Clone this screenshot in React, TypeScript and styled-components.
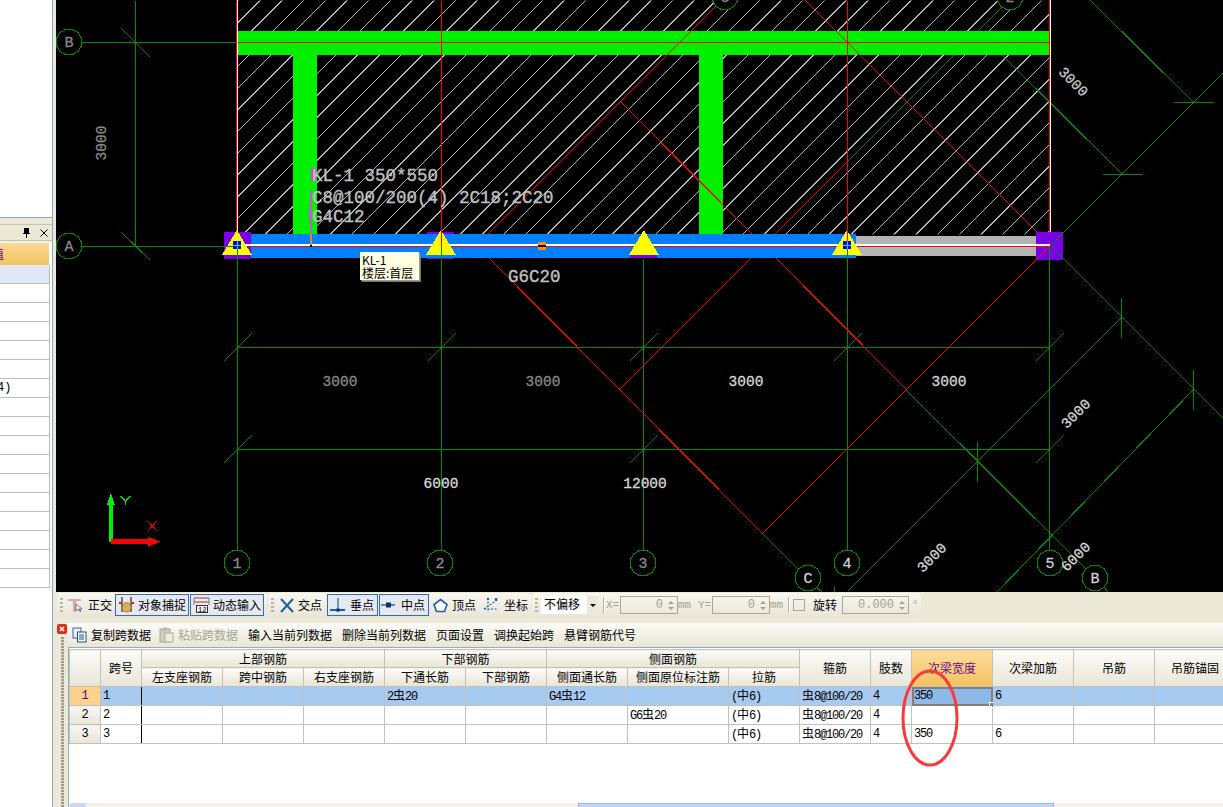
import React from "react";
import styled, { createGlobalStyle } from "styled-components";

const Global = createGlobalStyle`
  html, body { margin: 0; padding: 0; background: #ece9d8; overflow: hidden; }
  #root { width: 1223px; height: 807px; }
`;

const cjk = `"Noto Sans CJK SC", "Liberation Sans", sans-serif`;
const mono = `"Liberation Mono", "Noto Sans CJK SC", monospace`;

const Root = styled.div`
  width: 1223px; height: 807px; display: flex; overflow: hidden; background: #ece9d8;
  font: 12px/14px ${cjk}; color: #000;
`;

/* ---------- left dock ---------- */
const Side = styled.aside`
  width: 52px; flex: none; display: flex; flex-direction: column; background: #ece9d8; overflow: hidden;
`;
const TopPane = styled.div`
  height: 217px; background: #fff; border-bottom: 1px solid #8aa8c0; flex: none;
`;
const DockTitle = styled.div`
  height: 15px; margin-top: 6px; flex: none; display: flex; align-items: center; justify-content: flex-end;
  gap: 9px; padding-right: 4px; background: #ece9d8; border-top: 1px solid #c8c5b4; border-bottom: 1px solid #c8c5b4;
`;
const PropPane = styled.div`
  flex: 1; background: #fff; margin-top: 1px; padding-top: 1px;
`;
const PropHead = styled.div`
  width: 49px; height: 22px; overflow: hidden; background: linear-gradient(#fbd892, #f3c263);
  color: #5a0a80; line-height: 22px; text-indent: -8px;
`;
const PropRow = styled.div<{ $first?: boolean }>`
  width: 49px; height: 18px; border-bottom: 1px solid #bcbcbc; border-right: 1px solid #bcbcbc;
  background: ${(p) => (p.$first ? "#dfe8f4" : "#fff")};
  font: 12px/18px ${mono}; overflow: hidden; text-indent: -3px;
`;

/* ---------- main column ---------- */
const Main = styled.main`
  flex: 1; min-width: 0; display: flex; flex-direction: column; border-left: 1px solid #8aa8c0;
`;
const CanvasWrap = styled.div`
  position: relative; height: 592px; margin-left: 3px; background: #000; flex: none; overflow: hidden;
  svg { display: block; }
`;
const Tip = styled.div`
  position: absolute; left: 304px; top: 252px; width: 57px; height: 27px; padding: 1px 0 0 2px;
  background: #ffffe1; box-shadow: 1px 1px 0 #999, 2px 2px 0 #777; font: 12px/13px ${cjk}; color: #000; white-space: nowrap;
`;
const Bottom = styled.section`
  flex: 1; display: flex; flex-direction: column; background: #ece9d8; min-height: 0; position: relative;
`;
const ToolRow = styled.div`
  display: flex; gap: 1px; height: 24px; margin-top: 1px; padding-left: 4px; flex: none;
`;
const Group = styled.div<{ $w: number }>`
  width: ${(p) => p.$w}px; height: 24px; display: flex; align-items: center; flex: none; border-radius: 4px;
  padding-left: 3px; box-sizing: border-box;
  background: linear-gradient(#f8f7f0, #e9e6d7);
`;
const Grip = styled.i`
  width: 3px; height: 15px; margin-right: 3px; flex: none;
  background: repeating-linear-gradient(#b9b6a6 0 2px, transparent 2px 4px);
`;
const Item = styled.div<{ $w: number; $pad: number; $gap: number; $on?: boolean; $ml?: number }>`
  width: ${(p) => p.$w}px; height: 22px; box-sizing: border-box; display: flex; align-items: center; flex: none;
  gap: ${(p) => p.$gap}px; padding-left: ${(p) => p.$pad}px; margin-left: ${(p) => p.$ml ?? 0}px; white-space: nowrap;
  border: 1px solid ${(p) => (p.$on ? "#316ac5" : "transparent")};
  background: ${(p) => (p.$on ? "#e6e9f0" : "transparent")};
  svg { flex: none; }
`;
const Combo = styled.div`
  width: 58px; height: 18px; display: flex; margin-right: 4px; background: #fff; flex: none; padding-left: 3px; box-sizing: border-box;
  line-height: 16px;
`;
const ComboArrow = styled.span`
  width: 12px; margin-left: auto; background: #ece9d8; display: flex; align-items: center; justify-content: center;
  &::before { content: ""; border: 3px solid transparent; border-top: 3px solid #000; margin-top: 3px; }
`;
const Sep = styled.i<{ $ml?: number; $mr?: number }>`
  width: 1px; height: 16px; background: #b5b2a2; box-shadow: 1px 0 0 #fff; flex: none;
  margin: 0 ${(p) => p.$mr ?? 2}px 0 ${(p) => p.$ml ?? 0}px;
`;
const Muted = styled.span<{ $w: number; $ml?: number }>`
  width: ${(p) => p.$w}px; margin-left: ${(p) => p.$ml ?? 0}px; flex: none; color: #a5a293; font: 11px/14px ${mono}; white-space: nowrap;
`;
const Spin = styled.div<{ $w: number; $ml?: number }>`
  width: ${(p) => p.$w}px; height: 18px; margin-left: ${(p) => p.$ml ?? 0}px; box-sizing: border-box; flex: none;
  border: 1px solid #aca899; display: flex; align-items: center; justify-content: flex-end;
  color: #a5a293; font: 12px/16px ${mono}; gap: 5px; padding-right: 3px;
`;
const SpinBtns = styled.span`
  display: flex; flex-direction: column; gap: 3px;
  &::before { content: ""; border: 3px solid transparent; border-top: 0; border-bottom: 3px solid #a5a293; }
  &::after { content: ""; border: 3px solid transparent; border-bottom: 0; border-top: 3px solid #a5a293; }
`;
const Check = styled.i`
  width: 10px; height: 10px; border: 1px solid #aca899; margin-left: 3px; flex: none;
`;
const Label = styled.span<{ $ml?: number }>`
  margin-left: ${(p) => p.$ml ?? 0}px; flex: none;
`;

const Lower = styled.div`
  flex: 1; display: flex; margin-top: 6px; min-height: 0;
`;
const Gutter = styled.div`
  width: 15px; flex: none; padding: 1px 0 0 4px; box-sizing: border-box; display: flex; flex-direction: column; gap: 3px;
`;
const Dotted = styled.i`
  width: 3px; margin-left: 4px; flex: 1;
  background: repeating-linear-gradient(#9c9a8c 0 2px, #e2dfcf 2px 3px);
`;
const Content = styled.div`
  flex: 1; min-width: 0; display: flex; flex-direction: column;
`;
const Bar = styled.div`
  height: 25px; flex: none; display: flex; align-items: center; padding-left: 4px; white-space: nowrap;
  background: linear-gradient(#fcfbf6, #e9e6d8); border-bottom: 1px solid #94aec0; box-sizing: border-box;
`;
const BarBtn = styled.span<{ $off?: boolean; $ml?: number; $gap?: number }>`
  display: flex; align-items: center; gap: ${(p) => p.$gap ?? 0}px; margin-left: ${(p) => p.$ml ?? 0}px;
  color: ${(p) => (p.$off ? "#a8a598" : "#000")};
`;
const GridBox = styled.div`
  flex: 1; min-height: 0; background: #fff; border-left: 1px solid #94aec0; padding-top: 1px; overflow: hidden; position: relative;
`;
const Table = styled.table`
  table-layout: fixed; width: 1166px; border-collapse: collapse; font: 12px/14px ${cjk};
`;
const Th = styled.th<{ $sel?: boolean; $h: number }>`
  height: ${(p) => p.$h}px; padding: 0; font-weight: 400; text-align: center; box-sizing: border-box; white-space: nowrap;
  border: 1px solid #c4c2b6; color: ${(p) => (p.$sel ? "#6a0a8a" : "#000")};
  background: ${(p) => (p.$sel ? "linear-gradient(#fcdc9c, #f3c160)" : "linear-gradient(#fcfbf7, #e8e5d7)")};
`;
const RowHead = styled.td<{ $sel?: boolean }>`
  height: 19px; padding: 0; text-align: center; box-sizing: border-box; border: 1px solid #c0c0c0;
  font: 12px/14px ${mono};
  color: ${(p) => (p.$sel ? "#4a0a80" : "#000")};
  background: ${(p) => (p.$sel ? "#ffd18c" : "linear-gradient(#f8f7f1, #e8e5d8)")};
`;
const Td = styled.td<{ $sel?: boolean; $frozen?: boolean; $active?: boolean }>`
  height: 19px; padding: 0 0 0 2px; box-sizing: border-box; overflow: hidden; white-space: nowrap; position: relative;
  border: 1px solid #c0c0c0; border-right: 1px solid ${(p) => (p.$frozen ? "#000" : "#c0c0c0")};
  font: 12px/14px ${mono}; letter-spacing: -1.2px;
  background: ${(p) => (p.$active ? "#8db8e8" : p.$sel ? "#a6caf0" : "#fff")};
  ${(p) => p.$active && "outline: 2px solid #808080; outline-offset: -2px; overflow: visible;"}
`;
const Handle = styled.i`
  position: absolute; right: -3px; bottom: -3px; width: 4px; height: 4px; background: #808080; border: 1px solid #fff;
`;
const Rebar = styled.span`
  font: 12px/14px ${cjk}; letter-spacing: 0;
`;
const Ring = styled.svg`
  position: absolute; left: 831px; top: 20px; pointer-events: none;
`;
const Scroll = styled.div`
  position: absolute; left: 0; right: 0; bottom: 0; height: 4px; display: flex; background: #f4f2e8;
`;
const ScrollBtn = styled.i`
  width: 16px; flex: none; background: #c7d6f5; margin-left: 1px; border-radius: 2px 2px 0 0;
`;
const ScrollThumb = styled.i`
  width: 476px; margin-left: 492px; flex: none; background: #c3d4fa; border: 1px solid #9db4e4; border-bottom: 0; box-sizing: border-box;
`;

/* ---------- icons ---------- */
const Ortho = () => (
  <svg width="16" height="16" viewBox="0 0 16 16"><path d="M1 2h13v2H9v11H6V4H1z" fill="#d9a8a8" /><path d="M9 7v7l2-2 2 3 1-1-2-2h3z" fill="#fff" stroke="#556" strokeWidth=".8" /></svg>
);
const Snap = () => (
  <svg width="17" height="18" viewBox="0 0 17 18"><path d="M4 1v15M13 1v15" stroke="#7a3a2a" strokeWidth="1.5" /><path d="M1 7h2M14 7h2" stroke="#c02020" strokeWidth="2" /><path d="M5 9c1-3 5-3 7-1 2 3 1 7-2 8-3 0-6-1-6-4z" fill="#d8b050" stroke="#8a7030" strokeWidth=".7" /></svg>
);
const Dyn = () => (
  <svg width="17" height="17" viewBox="0 0 17 17"><path d="M1 1h15M1 5h15" stroke="#b03030" strokeWidth="1.2" /><path d="M1 1v7M16 1v7" stroke="#777" /><rect x="3.5" y="8.5" width="11" height="7" fill="#f4f4f4" stroke="#333" /><text x="5" y="14.5" fontSize="7" fontFamily="Liberation Mono">12</text></svg>
);
const Cross = () => (
  <svg width="14" height="15" viewBox="0 0 14 15"><path d="M1 1l12 13M13 1L1 14" stroke="#1c5cb0" strokeWidth="2" /></svg>
);
const Perp = () => (
  <svg width="15" height="16" viewBox="0 0 15 16"><path d="M8 1v14" stroke="#1c5cb0" strokeWidth="1.2" /><path d="M0 13h15" stroke="#1c5cb0" strokeWidth="2" /><rect x="6.5" y="11.5" width="3" height="3" fill="#12306a" /></svg>
);
const Mid = () => (
  <svg width="14" height="8" viewBox="0 0 14 8"><path d="M0 4h14" stroke="#5a86c0" strokeWidth="2" /><rect x="5" y="1.5" width="5" height="5" fill="#12306a" /></svg>
);
const Vertex = () => (
  <svg width="15" height="15" viewBox="0 0 15 15"><path d="M7.5 1.5L14 6.5l-2.5 7h-8L1 6.5z" fill="#fff" stroke="#1c5cb0" strokeWidth="1.6" /></svg>
);
const Coord = () => (
  <svg width="16" height="17" viewBox="0 0 16 17"><path d="M5 1v14M1 12h14M1 12L14 3" stroke="#1c5cb0" strokeWidth="1.2" strokeDasharray="2 1.5" /><circle cx="13" cy="2.5" r="1.4" fill="#1c5cb0" /><circle cx="5" cy="2" r="1.2" fill="#1c5cb0" /></svg>
);
const Copy = () => (
  <svg width="15" height="16" viewBox="0 0 15 16"><rect x="1" y="1" width="8" height="10" fill="#e8f0fa" stroke="#3a66a8" /><rect x="5.5" y="5" width="8.5" height="10" fill="#fff" stroke="#1e4a90" /><path d="M7 8h5M7 10h5M7 12h5" stroke="#1e4a90" /></svg>
);
const Paste = () => (
  <svg width="15" height="16" viewBox="0 0 15 16"><rect x="1" y="2" width="10" height="13" fill="#d0cdc0" stroke="#aaa79a" /><rect x="4" y="0.5" width="4" height="3" fill="#bbb8aa" /><rect x="6" y="6" width="8" height="9" fill="#eeece2" stroke="#b0ad9f" /></svg>
);
const Close = () => (
  <svg width="10" height="10" viewBox="0 0 10 10"><rect width="10" height="10" rx="2" fill="#d8301c" /><path d="M3 3l4 4M7 3l-4 4" stroke="#fff" strokeWidth="1.5" /></svg>
);
const Pin = () => (
  <svg width="9" height="10" viewBox="0 0 9 10"><path d="M2 0h5v5h1v1H5v4H4V6H1V5h1z" fill="#000" /></svg>
);
const X = () => (
  <svg width="8" height="8" viewBox="0 0 8 8"><path d="M0.5 0.5l7 7M7.5 0.5l-7 7" stroke="#000" strokeWidth="1" /></svg>
);

/* ---------- CAD drawing ---------- */
const G = "#008a00";
const R = "#ff0000";
type Seg = [number, number, number, number];
const greens: Seg[] = [
  [69, 42, 237, 42], [69, 246, 237, 246], [135, 0, 135, 246],
  [121, 28, 150, 57], [121, 232, 150, 260],
  [237, 258, 237, 550], [441, 258, 441, 550], [643, 258, 643, 550], [847, 258, 847, 550], [1049, 258, 1049, 550],
  [237, 347, 1049, 347], [237, 449, 1049, 449],
  [762, 533, 801, 572], [815, 586, 822, 592],
  [906, 390, 1087, 570], [1103, 586, 1108, 592],
  [847, 161, 1008, 0],
  [1050, 245, 1223, 72], [1050, 245, 1223, 418], [1090, 0, 1193, 102], [1000, 53, 1122, 174],
  [1121, 317, 847, 591], [1193, 389, 996, 592],
  [1173, 102, 1213, 102], [1102, 174, 1142, 174],
  [1121, 297, 1121, 337], [1193, 369, 1193, 409], [977, 441, 977, 481], [834, 585, 834, 592],
  ...[237, 441, 643, 847, 1049].map((x): Seg => [x - 14, 361, x + 14, 333]),
  ...[237, 643, 1049].map((x): Seg => [x - 14, 463, x + 14, 435]),
];
const reds: Seg[] = [
  [237, 42, 1049, 42], [441, 0, 441, 234], [847, 0, 847, 234],
  [476, 245, 721, 0], [805, 0, 1050, 245], [476, 245, 762, 533], [1050, 245, 762, 533],
  [620, 101, 906, 389], [619, 389, 847, 161],
];
const hatch = Array.from({ length: 60 }, (_, i) => 238 + i * 21.7);

type Bub = [number, number, string, string];
const bubbles: Bub[] = [
  [69, 42, "B", "#8a8a8a"], [69, 246, "A", "#8a8a8a"],
  [237, 563, "1", "#8a8a8a"], [440, 563, "2", "#8a8a8a"], [643, 563, "3", "#8a8a8a"],
  [847, 563, "4", "#d0d0d0"], [1050, 563, "5", "#d0d0d0"], [808, 578, "C", "#d0d0d0"], [1095, 578, "B", "#d0d0d0"],
  [725, -3, "3", "#8a8a8a"], [1010, -3, "2", "#8a8a8a"],
];
const ring = (cx: number, cy: number) =>
  Array.from({ length: 12 }, (_, i) => {
    const a = (i * Math.PI) / 6 + Math.PI / 12;
    return `${(cx + 13 * Math.cos(a)).toFixed(1)},${(cy + 13 * Math.sin(a)).toFixed(1)}`;
  }).join(" ");

const dims: [number, number, string, string, number][] = [
  [340, 386, "3000", "#8a8a8a", 0], [543, 386, "3000", "#8a8a8a", 0], [746, 386, "3000", "#d8d8d8", 0], [949, 386, "3000", "#d8d8d8", 0],
  [441, 488, "6000", "#d8d8d8", 0], [645, 488, "12000", "#d8d8d8", 0],
  [1070, 85, "3000", "#c8c8c8", 45], [1079, 417, "3000", "#d8d8d8", -45], [935, 561, "3000", "#d8d8d8", -45], [1079, 560, "6000", "#d8d8d8", -45],
  [106, 143, "3000", "#8a8a8a", -90],
];

const Tri = ({ x }: { x: number }) => (
  <polygon points={`${x},230 ${x + 15},255 ${x - 15},255`} fill="#ffff00" />
);
const Cad = () => (
  <svg width="1167" height="592" viewBox="56 0 1167 592">
    <defs><clipPath id="h"><rect x="237" y="0" width="813" height="234" /></clipPath></defs>
    <g shapeRendering="crispEdges">
      <g clipPath="url(#h)" stroke="#b8b8b8" transform="translate(.5 .5)">
        {hatch.map((c) => <line key={c} x1={c - 240} y1={240} x2={c + 10} y2={-10} />)}
      </g>
      <g stroke={G} transform="translate(.5 .5)">{greens.map((s, i) => <line key={i} x1={s[0]} y1={s[1]} x2={s[2]} y2={s[3]} />)}</g>
      <rect x="237" y="31" width="813" height="24" fill="#00f000" />
      <rect x="293" y="55" width="24" height="179" fill="#00f000" />
      <rect x="699" y="55" width="24" height="179" fill="#00f000" />
      <g stroke={R} transform="translate(.5 .5)">{reds.map((s, i) => <line key={i} x1={s[0]} y1={s[1]} x2={s[2]} y2={s[3]} />)}</g>
      <rect x="236" y="0" width="1" height="234" fill="#ff0000" />
      <rect x="237" y="0" width="1" height="234" fill="#fff" />
      <rect x="1050" y="0" width="1" height="245" fill="#fff" />
      <rect x="1049" y="0" width="1" height="245" fill="#ff0000" />
      <rect x="427" y="232" width="27" height="27" fill="#7a00e8" />
      <rect x="224" y="234" width="632" height="24" fill="#0080ff" />
      <rect x="224" y="232" width="27" height="27" fill="#7a00e8" />
      <rect x="856" y="236" width="181" height="20" fill="#b4b4b4" />
      <rect x="1036" y="232" width="27" height="28" fill="#7a00e8" />
      <rect x="237" y="244" width="813" height="2" fill="#fff" />
      <rect x="237" y="246" width="813" height="1" fill="#ff0000" />
      <g transform="translate(.5 .5)">
        <line x1="1050" y1="245" x2="1063" y2="232" stroke={G} />
        <line x1="1050" y1="245" x2="1063" y2="258" stroke={G} />
        <line x1="1049" y1="245" x2="1049" y2="260" stroke={G} />
        <line x1="1036" y1="259" x2="1050" y2="245" stroke={R} />
      </g>
      <Tri x={237} /><Tri x={441} /><Tri x={644} /><Tri x={847} />
      <rect x="630" y="255" width="27" height="3" fill="#7a00e8" />
      <g transform="translate(.5 .5)">
        <line x1="441" y1="0" x2="441" y2="246" stroke={R} />
        <line x1="847" y1="0" x2="847" y2="246" stroke={R} />
        <line x1="222" y1="246" x2="237" y2="246" stroke={G} />
        <line x1="237" y1="246" x2="237" y2="270" stroke={G} />
        <line x1="441" y1="246" x2="441" y2="270" stroke={G} />
        <line x1="847" y1="246" x2="847" y2="270" stroke={G} />
      </g>
      <rect x="233" y="241" width="8" height="8" fill="#0000ff" />
      <path d="M233 245.5h8M237.5 241v8" stroke="#00e0e0" />
      <rect x="843" y="241" width="8" height="8" fill="#0000ff" />
      <path d="M843 245.5h8M847.5 241v8" stroke="#00e0e0" />
      <rect x="538" y="242" width="8" height="8" fill="#ff8a10" />
      <rect x="538" y="245" width="8" height="2" fill="#000" />
      <rect x="310" y="190" width="2" height="44" fill="#c060c0" />
      <rect x="310" y="234" width="2" height="11" fill="#f08020" />
      <rect x="310" y="245" width="2" height="2" fill="#000" />
      <rect x="311" y="168" width="5" height="13" fill="#c850c8" />
      <rect x="309" y="205" width="3" height="16" fill="#c060c0" />
      {bubbles.map(([x, y], i) => <polygon key={i} points={ring(x, y)} fill="#000" stroke={G} />)}
      <rect x="109" y="503" width="4" height="39" fill="#00f000" />
      <polygon points="111,493 115,505 107,505" fill="#00f000" />
      <rect x="111" y="539" width="39" height="5" fill="#ff0000" />
      <polygon points="160,541.5 148,537 148,547" fill="#ff0000" />
      <path d="M120.5 496l5 5 5-5M125.5 501v4" stroke="#00e000" fill="none" />
      <path d="M148 521l9 10M157 521l-9 10" stroke="#e00000" fill="none" />
    </g>
    <g fontFamily="Liberation Mono" fontSize="17.5" fill="#c0c0c0" stroke="#c0c0c0" strokeWidth=".35">
      <text x="312" y="181">KL-1 350*550</text>
      <text x="312" y="203">C8@100/200(4) 2C18;2C20</text>
      <text x="312" y="222">G4C12</text>
      <text x="508" y="282">G6C20</text>
    </g>
    <g fontFamily="Liberation Mono" fontSize="15">
      {bubbles.map(([x, y, t, c], i) => <text key={i} x={x} y={y + 5} textAnchor="middle" fill={c} stroke={c} strokeWidth=".3">{t}</text>)}
    </g>
    <g fontFamily="Liberation Mono" fontSize="14.5">
      {dims.map(([x, y, t, c, r], i) => (
        <text key={i} x={x} y={y} fill={c} stroke={c} strokeWidth=".3" textAnchor="middle"
          transform={r ? `rotate(${r} ${x} ${y})` : undefined}>{t}</text>
      ))}
    </g>
  </svg>
);

/* ---------- grid data ---------- */
const cols = [31, 41, 81, 81, 81, 81, 81, 81, 101, 71, 71, 41, 81, 81, 81, 81];
const rb = (a: string, b: string) => <>{a}<Rebar>虫</Rebar>{b}</>;
const stir = rb("", "8@100/20");
const pull = <>(<Rebar>中</Rebar>6)</>;
const rows = [
  { n: "1", sel: true, c: ["", "", "", rb("2", "20"), "", rb("G4", "12"), "", pull, stir, "4", "350", "6", "", ""] },
  { n: "2", sel: false, c: ["", "", "", "", "", "", rb("G6", "20"), pull, stir, "4", "", "", "", ""] },
  { n: "3", sel: false, c: ["", "", "", "", "", "", "", pull, stir, "4", "350", "6", "", ""] },
];

export default function App() {
  return (
    <Root>
      <Global />
      <Side>
        <TopPane />
        <DockTitle><Pin /><X /></DockTitle>
        <PropPane>
          <PropHead>值</PropHead>
          {Array.from({ length: 17 }, (_, i) => (
            <PropRow key={i} $first={i === 0}>{i === 6 ? "4)" : ""}</PropRow>
          ))}
        </PropPane>
      </Side>
      <Main>
        <CanvasWrap>
          <Cad />
          <Tip>KL-1<br />楼层:首层</Tip>
        </CanvasWrap>
        <Bottom>
          <ToolRow>
            <Group $w={210}>
              <Grip />
              <Item $w={47} $pad={0} $gap={5}><Ortho />正交</Item>
              <Item $w={74} $pad={2} $gap={3} $on $ml={2}><Snap />对象捕捉</Item>
              <Item $w={74} $pad={2} $gap={3} $on $ml={1}><Dyn />动态输入</Item>
            </Group>
            <Group $w={263}>
              <Grip />
              <Item $w={47} $pad={2} $gap={4}><Cross />交点</Item>
              <Item $w={51} $pad={2} $gap={5} $on $ml={3}><Perp />垂点</Item>
              <Item $w={50} $pad={1} $gap={6} $on $ml={1}><Mid />中点</Item>
              <Item $w={46} $pad={1} $gap={4} $ml={2}><Vertex />顶点</Item>
              <Item $w={50} $pad={3} $gap={5} $ml={2}><Coord />坐标</Item>
            </Group>
            <Group $w={389}>
              <Grip />
              <Combo>不偏移<ComboArrow /></Combo>
              <Sep />
              <Muted $w={14}>X=</Muted>
              <Spin $w={58}>0<SpinBtns /></Spin>
              <Muted $w={20}>mm</Muted>
              <Muted $w={14}>Y=</Muted>
              <Spin $w={58}>0<SpinBtns /></Spin>
              <Muted $w={18}>mm</Muted>
              <Sep $mr={1} />
              <Check />
              <Label $ml={8}>旋转</Label>
              <Spin $w={67} $ml={5}>0.000<SpinBtns /></Spin>
              <Muted $w={10} $ml={3}>°</Muted>
            </Group>
          </ToolRow>
          <Lower>
            <Gutter><Close /><Dotted /></Gutter>
            <Content>
              <Bar>
                <BarBtn $gap={4}><Copy />复制跨数据</BarBtn>
                <BarBtn $off $ml={8} $gap={4}><Paste />粘贴跨数据</BarBtn>
                <BarBtn $ml={10}>输入当前列数据</BarBtn>
                <BarBtn $ml={10}>删除当前列数据</BarBtn>
                <BarBtn $ml={10}>页面设置</BarBtn>
                <BarBtn $ml={10}>调换起始跨</BarBtn>
                <BarBtn $ml={10}>悬臂钢筋代号</BarBtn>
              </Bar>
              <GridBox>
                <Table>
                  <colgroup>{cols.map((w, i) => <col key={i} style={{ width: w }} />)}</colgroup>
                  <thead>
                    <tr>
                      <Th $h={18} rowSpan={2} />
                      <Th $h={18} rowSpan={2}>跨号</Th>
                      <Th $h={18} colSpan={3}>上部钢筋</Th>
                      <Th $h={18} colSpan={2}>下部钢筋</Th>
                      <Th $h={18} colSpan={3}>侧面钢筋</Th>
                      <Th $h={18} rowSpan={2}>箍筋</Th>
                      <Th $h={18} rowSpan={2}>肢数</Th>
                      <Th $h={18} rowSpan={2} $sel>次梁宽度</Th>
                      <Th $h={18} rowSpan={2}>次梁加筋</Th>
                      <Th $h={18} rowSpan={2}>吊筋</Th>
                      <Th $h={18} rowSpan={2}>吊筋锚固</Th>
                    </tr>
                    <tr>
                      {["左支座钢筋", "跨中钢筋", "右支座钢筋", "下通长筋", "下部钢筋", "侧面通长筋", "侧面原位标注筋", "拉筋"].map((t) => (
                        <Th $h={19} key={t}>{t}</Th>
                      ))}
                    </tr>
                  </thead>
                  <tbody>
                    {rows.map((r) => (
                      <tr key={r.n}>
                        <RowHead $sel={r.sel}>{r.n}</RowHead>
                        <Td $sel={r.sel} $frozen>{r.n}</Td>
                        {r.c.map((v, i) => (
                          <Td key={i} $sel={r.sel} $active={r.sel && i === 10}>
                            {v}
                            {r.sel && i === 10 && <Handle />}
                          </Td>
                        ))}
                      </tr>
                    ))}
                  </tbody>
                </Table>
                <Ring width="60" height="100" viewBox="0 0 60 100">
                  <ellipse cx="30" cy="50" rx="27" ry="47" fill="none" stroke="#fa3a3a" strokeWidth="3" />
                </Ring>
                <Scroll><ScrollBtn /><ScrollThumb /></Scroll>
              </GridBox>
            </Content>
          </Lower>
        </Bottom>
      </Main>
    </Root>
  );
}
